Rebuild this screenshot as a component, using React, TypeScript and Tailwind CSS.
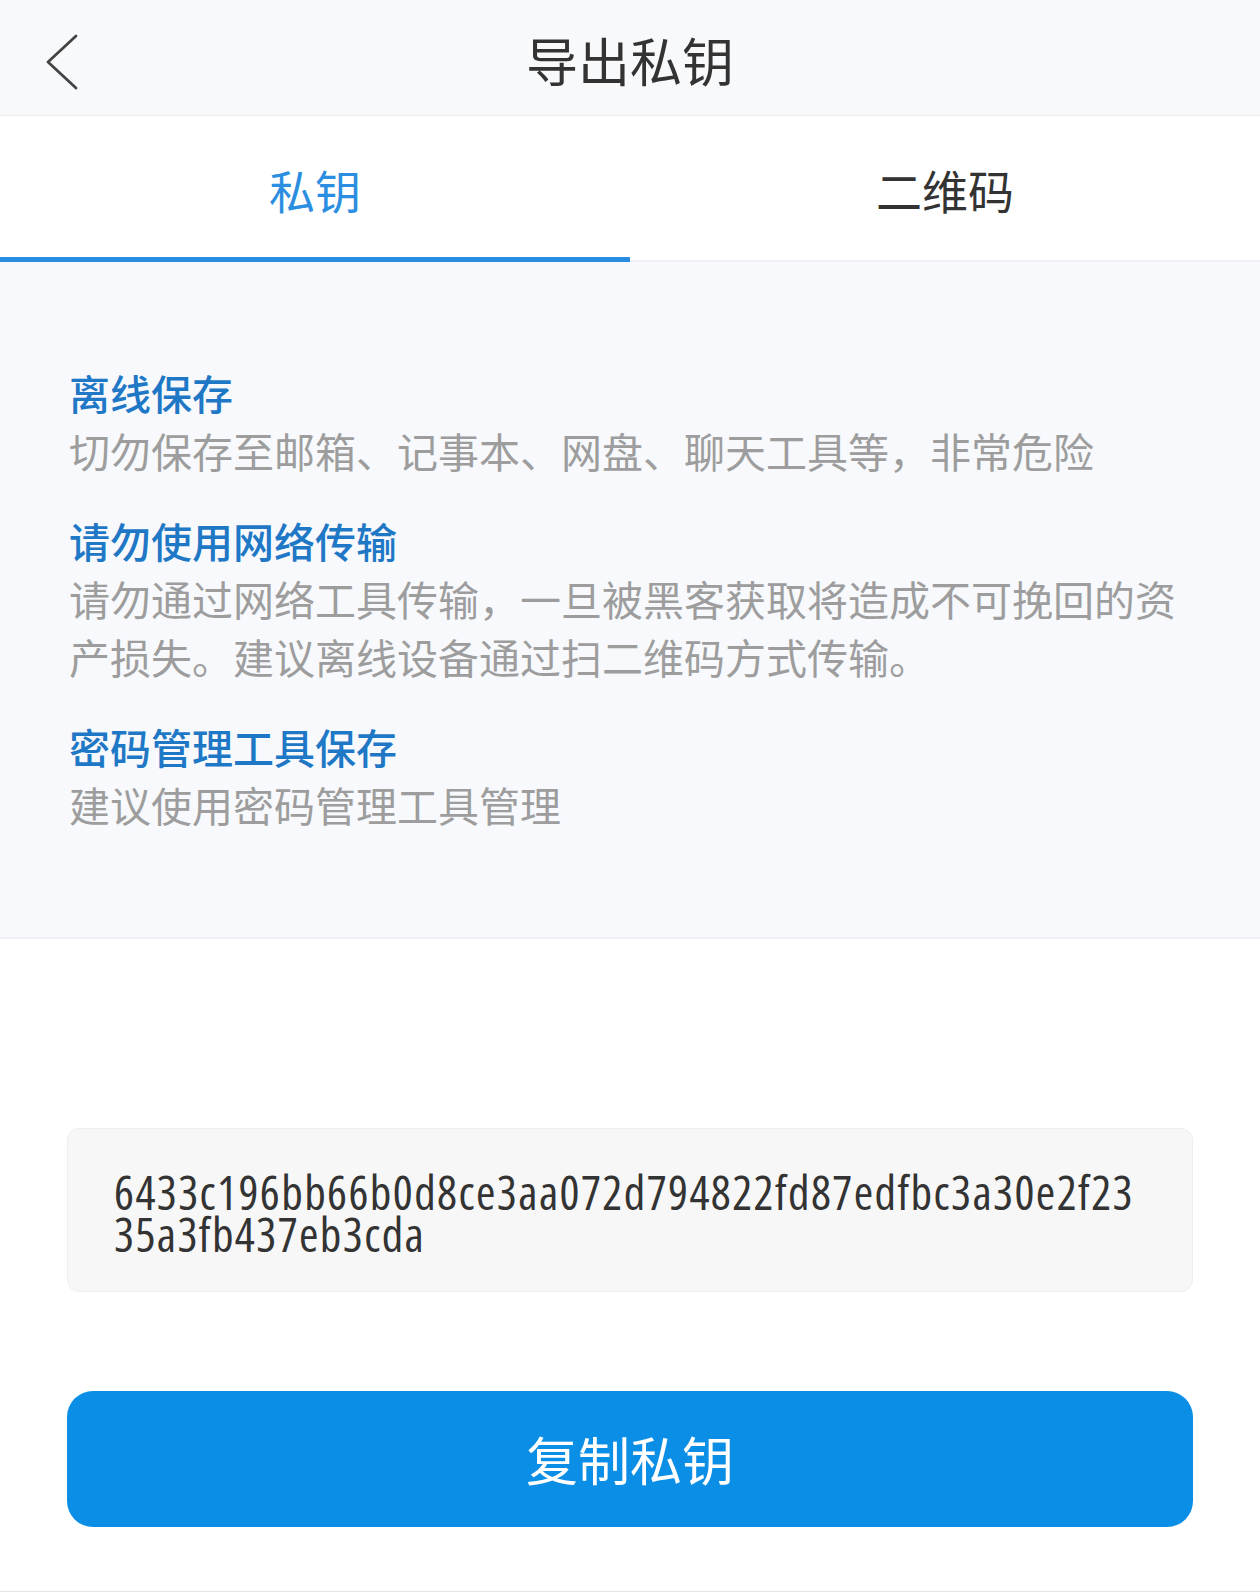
const PRIVATE_KEY = '6433c196bb66b0d8ce3aa072d794822fd87edfbc3a30e2f2335a3fb437eb3cda';

type Tip = { title: string; desc: string };

const tips: Tip[] = [
  { title: '离线保存', desc: '切勿保存至邮箱、记事本、网盘、聊天工具等，非常危险' },
  {
    title: '请勿使用网络传输',
    desc: '请勿通过网络工具传输，一旦被黑客获取将造成不可挽回的资产损失。建议离线设备通过扫二维码方式传输。',
  },
  { title: '密码管理工具保存', desc: '建议使用密码管理工具管理' },
];

function BackIcon() {
  return (
    <svg width="36" height="58" viewBox="0 0 36 58" fill="none">
      <polyline
        points="31,3 3,29 31,55"
        stroke="#444"
        strokeWidth="2.8"
        strokeLinecap="round"
        strokeLinejoin="round"
      />
    </svg>
  );
}

function Header() {
  return (
    <div className="relative h-[116px] flex items-center justify-center bg-[#f8f9fb] border-b border-[#eceef1]">
      <button className="absolute left-[45px] top-[33px]">
        <BackIcon />
      </button>
      <h1 className="pt-[4px] text-[52px] text-[#333]">导出私钥</h1>
    </div>
  );
}

function Tabs() {
  return (
    <div className="flex h-[146px] bg-white">
      <div className="flex-1 flex flex-col">
        <div className="flex-1 flex items-center justify-center pt-[6px] text-[46px] text-[#2b8ee0]">私钥</div>
        <div className="h-[5px] bg-[#2a8ce0]" />
      </div>
      <div className="flex-1 flex flex-col">
        <div className="flex-1 flex items-center justify-center pt-[6px] text-[46px] text-[#333]">二维码</div>
        <div className="h-[5px] flex flex-col justify-end">
          <div className="h-[2px] bg-[#f0f1f4]" />
        </div>
      </div>
    </div>
  );
}

function Tips() {
  return (
    <div className="flex flex-col gap-[32px] pt-[101px] pb-[104px] px-[69px] bg-[#f7f9fc] border-b-2 border-[#eff1f4]">
      {tips.map((tip) => (
        <div key={tip.title} className="flex flex-col">
          <div className="text-[41px] leading-[58px] font-medium text-[#1f78c6]">{tip.title}</div>
          <div className="text-[41px] leading-[58px] text-[#9d9d9d]">{tip.desc}</div>
        </div>
      ))}
    </div>
  );
}

export default function App() {
  return (
    <div className="h-[1592px] flex flex-col bg-white font-['Noto_Sans_CJK_SC',sans-serif]">
      <Header />
      <Tabs />
      <Tips />
      <div className="flex-1 flex flex-col px-[67px] pt-[189px]">
        <div className="rounded-[12px] border border-[#eeeeee] bg-[#f7f7f7] pl-[46px] pr-[46px] pt-[42px] pb-[36px]">
          <p className="font-['Open_Sans',sans-serif] font-stretch-condensed text-[47px] tracking-[1.4px] leading-[42px] text-[#333] break-all">
            {PRIVATE_KEY}
          </p>
        </div>
        <button className="mt-[99px] h-[136px] rounded-[26px] bg-[#0b8ee6] text-[52px] text-white">
          复制私钥
        </button>
      </div>
      <div className="h-px bg-[#e4e4e4]" />
    </div>
  );
}
